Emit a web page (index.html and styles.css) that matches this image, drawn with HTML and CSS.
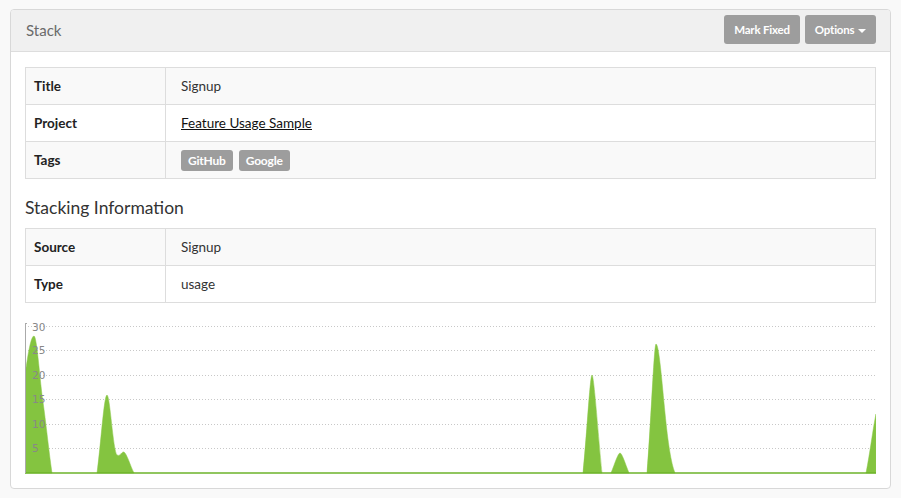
FILE: index.html
```html
<!DOCTYPE html>
<html>
<head>
<meta charset="utf-8">
<link rel="stylesheet" href="styles.css">
</head>
<body>
<div class="panel">
  <div class="panel-heading">
    <span class="panel-title">Stack</span>
    <div class="actions">
      <button class="btn">Mark Fixed</button>
      <button class="btn">Options <span class="caret"></span></button>
    </div>
  </div>
  <div class="panel-body">
    <table class="info">
      <tr><th>Title</th><td>Signup</td></tr>
      <tr><th>Project</th><td><a href="#">Feature Usage Sample</a></td></tr>
      <tr><th>Tags</th><td><span class="tag">GitHub</span><span class="tag">Google</span></td></tr>
    </table>
    <h4 class="section">Stacking Information</h4>
    <table class="info">
      <tr><th>Source</th><td>Signup</td></tr>
      <tr><th>Type</th><td>usage</td></tr>
    </table>
    <div class="chart">
      <svg width="851" height="151" viewBox="0 0 851 151">
        <g class="grid">
          <line x1="0" y1="3.5" x2="851" y2="3.5"/>
          <line x1="0" y1="27.5" x2="851" y2="27.5"/>
          <line x1="0" y1="52.5" x2="851" y2="52.5"/>
          <line x1="0" y1="76.5" x2="851" y2="76.5"/>
          <line x1="0" y1="101.5" x2="851" y2="101.5"/>
          <line x1="0" y1="125.5" x2="851" y2="125.5"/>
        </g>
        <g class="area">
          <path d="M0,150 L0,52 C3,30 6,13 9,13 C12,13 15,60 18,79 C21,100 24,130 27,150 Z"/>
          <path d="M72,150 C76,120 79,72 82,72 C85,72 88,128 92,132 C95,134 97,128 99,129 C102,131 105,142 109,150 Z"/>
          <path d="M558,150 C562,110 565,52 567,52 C569,52 573,110 577,150 Z"/>
          <path d="M586,150 C590,140 593,130 595,130 C597,130 600,140 604,150 Z"/>
          <path d="M622,150 C626,100 629,21 631,21 C634,21 637,60 640,90 C643,120 646,140 650,150 Z"/>
          <path d="M841,150 C845,130 848,105 851,91 L851,150 Z"/>
        </g>
        <line class="baseline" x1="0" y1="150" x2="851" y2="150"/>
        <line class="axis" x1="0.5" y1="0" x2="0.5" y2="150"/>
        <line class="axis" x1="0" y1="0.5" x2="2" y2="0.5"/>
        <g class="labels">
          <text x="7" y="8">30</text>
          <text x="7" y="31">25</text>
          <text x="7" y="56">20</text>
          <text x="7" y="80">15</text>
          <text x="7" y="105">10</text>
          <text x="7" y="129">5</text>
        </g>
      </svg>
    </div>
  </div>
</div>
</body>
</html>
```
FILE: styles.css
```css
html, body {
  margin: 0;
  padding: 0;
}
body {
  background: #f9f9f9;
  padding: 9px 10px 0 10px;
  font-family: "Source Sans Pro", Lato, "Liberation Sans", sans-serif;
  font-size: 14px;
  color: #333;
}
.panel {
  background: #fff;
  border: 1px solid #d8d8d8;
  border-radius: 4px;
  height: 480px;
  box-sizing: border-box;
  overflow: hidden;
}
.panel-heading {
  background: #f0f0f0;
  border-bottom: 1px solid #ddd;
  height: 42px;
  box-sizing: border-box;
  display: flex;
  align-items: center;
  justify-content: space-between;
  padding: 0 14px 2px 15px;
}
.panel-title {
  font-size: 15px;
  color: #6a6a6a;
}
.actions {
  display: flex;
  gap: 5px;
}
.btn {
  background: #9d9d9d;
  color: #fff;
  border: 0;
  border-radius: 3px;
  height: 29px;
  padding: 0 10px;
  font-family: inherit;
  font-weight: bold;
  font-size: 11.5px;
  letter-spacing: -0.2px;
}
.caret {
  display: inline-block;
  width: 0;
  height: 0;
  border-left: 4px solid transparent;
  border-right: 4px solid transparent;
  border-top: 4px solid #fff;
  vertical-align: middle;
  margin-left: 1px;
}
.panel-body {
  padding: 15px 14px 15px 14px;
}
.info {
  width: 100%;
  border-collapse: collapse;
  border: 1px solid #ddd;
}
.info tr:nth-child(odd) {
  background: #f9f9f9;
}
.info th, .info td {
  border: 1px solid #ddd;
  height: 37px;
  box-sizing: border-box;
  padding: 0 8px;
  text-align: left;
  line-height: 20px;
}
.info th {
  width: 140px;
  font-size: 13.5px;
  font-weight: bold;
  color: #222;
}
.info td {
  padding-left: 15px;
  font-size: 13.5px;
}
.info a {
  color: #111;
  text-decoration: underline;
}
.tag {
  display: inline-block;
  vertical-align: middle;
  background: #9d9d9d;
  color: #fff;
  font-weight: bold;
  font-size: 12px;
  letter-spacing: -0.2px;
  line-height: 21px;
  padding: 0 7px;
  border-radius: 3px;
  margin-right: 6px;
}
.section {
  font-size: 17.5px;
  font-weight: normal;
  line-height: 20px;
  margin: 19px 0 10px 0;
  color: #333;
}
.chart {
  margin-top: 20px;
  height: 151px;
}
.chart svg {
  display: block;
}
.grid line {
  stroke: #c8c8c8;
  stroke-width: 1;
  stroke-dasharray: 1 2;
}
.area path {
  fill: #84c440;
  stroke: #8cc94a;
  stroke-width: 0.5;
}
.baseline {
  stroke: #6db32a;
  stroke-width: 1.5;
}
.axis {
  stroke: #aaa;
  stroke-width: 1;
}
.labels text {
  font-family: "DejaVu Sans", sans-serif;
  font-size: 10.5px;
  fill: #888;
}
```
